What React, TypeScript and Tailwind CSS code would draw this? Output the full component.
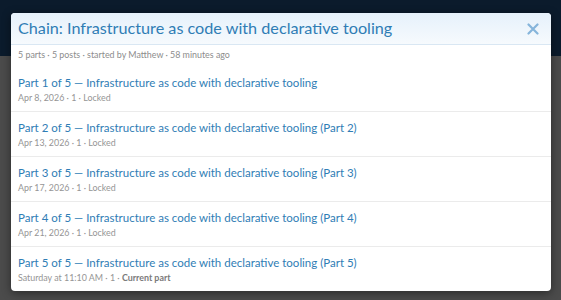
const parts = [
  { n: 1, title: "Infrastructure as code with declarative tooling", date: "Apr 8, 2026", current: false },
  { n: 2, title: "Infrastructure as code with declarative tooling (Part 2)", date: "Apr 13, 2026", current: false },
  { n: 3, title: "Infrastructure as code with declarative tooling (Part 3)", date: "Apr 17, 2026", current: false },
  { n: 4, title: "Infrastructure as code with declarative tooling (Part 4)", date: "Apr 21, 2026", current: false },
  { n: 5, title: "Infrastructure as code with declarative tooling (Part 5)", date: "Saturday at 11:10 AM", current: true },
];

export default function App() {
  return (
    <div
      className="relative h-[300px] w-[561px] overflow-hidden bg-[#4b4b4b]"
      style={{ fontFamily: 'Lato, "Open Sans", sans-serif' }}
    >
      <div className="h-[56px] bg-[#0b1b2c]" />
      <div className="absolute left-[11px] top-[13px] w-[540px] overflow-hidden rounded-[4px] bg-white shadow-[0_2px_10px_rgba(0,0,0,0.45)]">
        <div className="flex h-[32px] items-center justify-between border-b border-[#d9e7f3] bg-gradient-to-b from-[#e6f1fb] to-[#f6fafd] pl-[7px] pr-[12px]">
          <h2 className="text-[16.2px] leading-none text-[#2f7db5]">
            Chain: Infrastructure as code with declarative tooling
          </h2>
          <svg width="12" height="12" viewBox="0 0 12 12" className="text-[#86b5db]">
            <path d="M1.5 1.5 L10.5 10.5 M10.5 1.5 L1.5 10.5" stroke="currentColor" strokeWidth="2.2" strokeLinecap="round" />
          </svg>
        </div>
        <div className="px-[7px] pt-[3px] pb-[5px] text-[8.9px] leading-[14px] text-[#8c8c8c]">
          5 parts · 5 posts · started by Matthew · 58 minutes ago
        </div>
        {parts.map((p, i) => (
          <div
            key={p.n}
            className={
              "px-[7px] pt-[8px] pb-[7px] " + (i < parts.length - 1 ? "border-b border-[#ebebeb]" : "")
            }
          >
            <div className="text-[11.5px] leading-[16px] text-[#2f7db5]">
              Part {p.n} of 5 — {p.title}
            </div>
            <div className="text-[8.9px] leading-[13px] text-[#959595]">
              {p.date} · 1 ·{" "}
              {p.current ? <span className="font-bold text-[#7a7a7a]">Current part</span> : "Locked"}
            </div>
          </div>
        ))}
      </div>
    </div>
  );
}
